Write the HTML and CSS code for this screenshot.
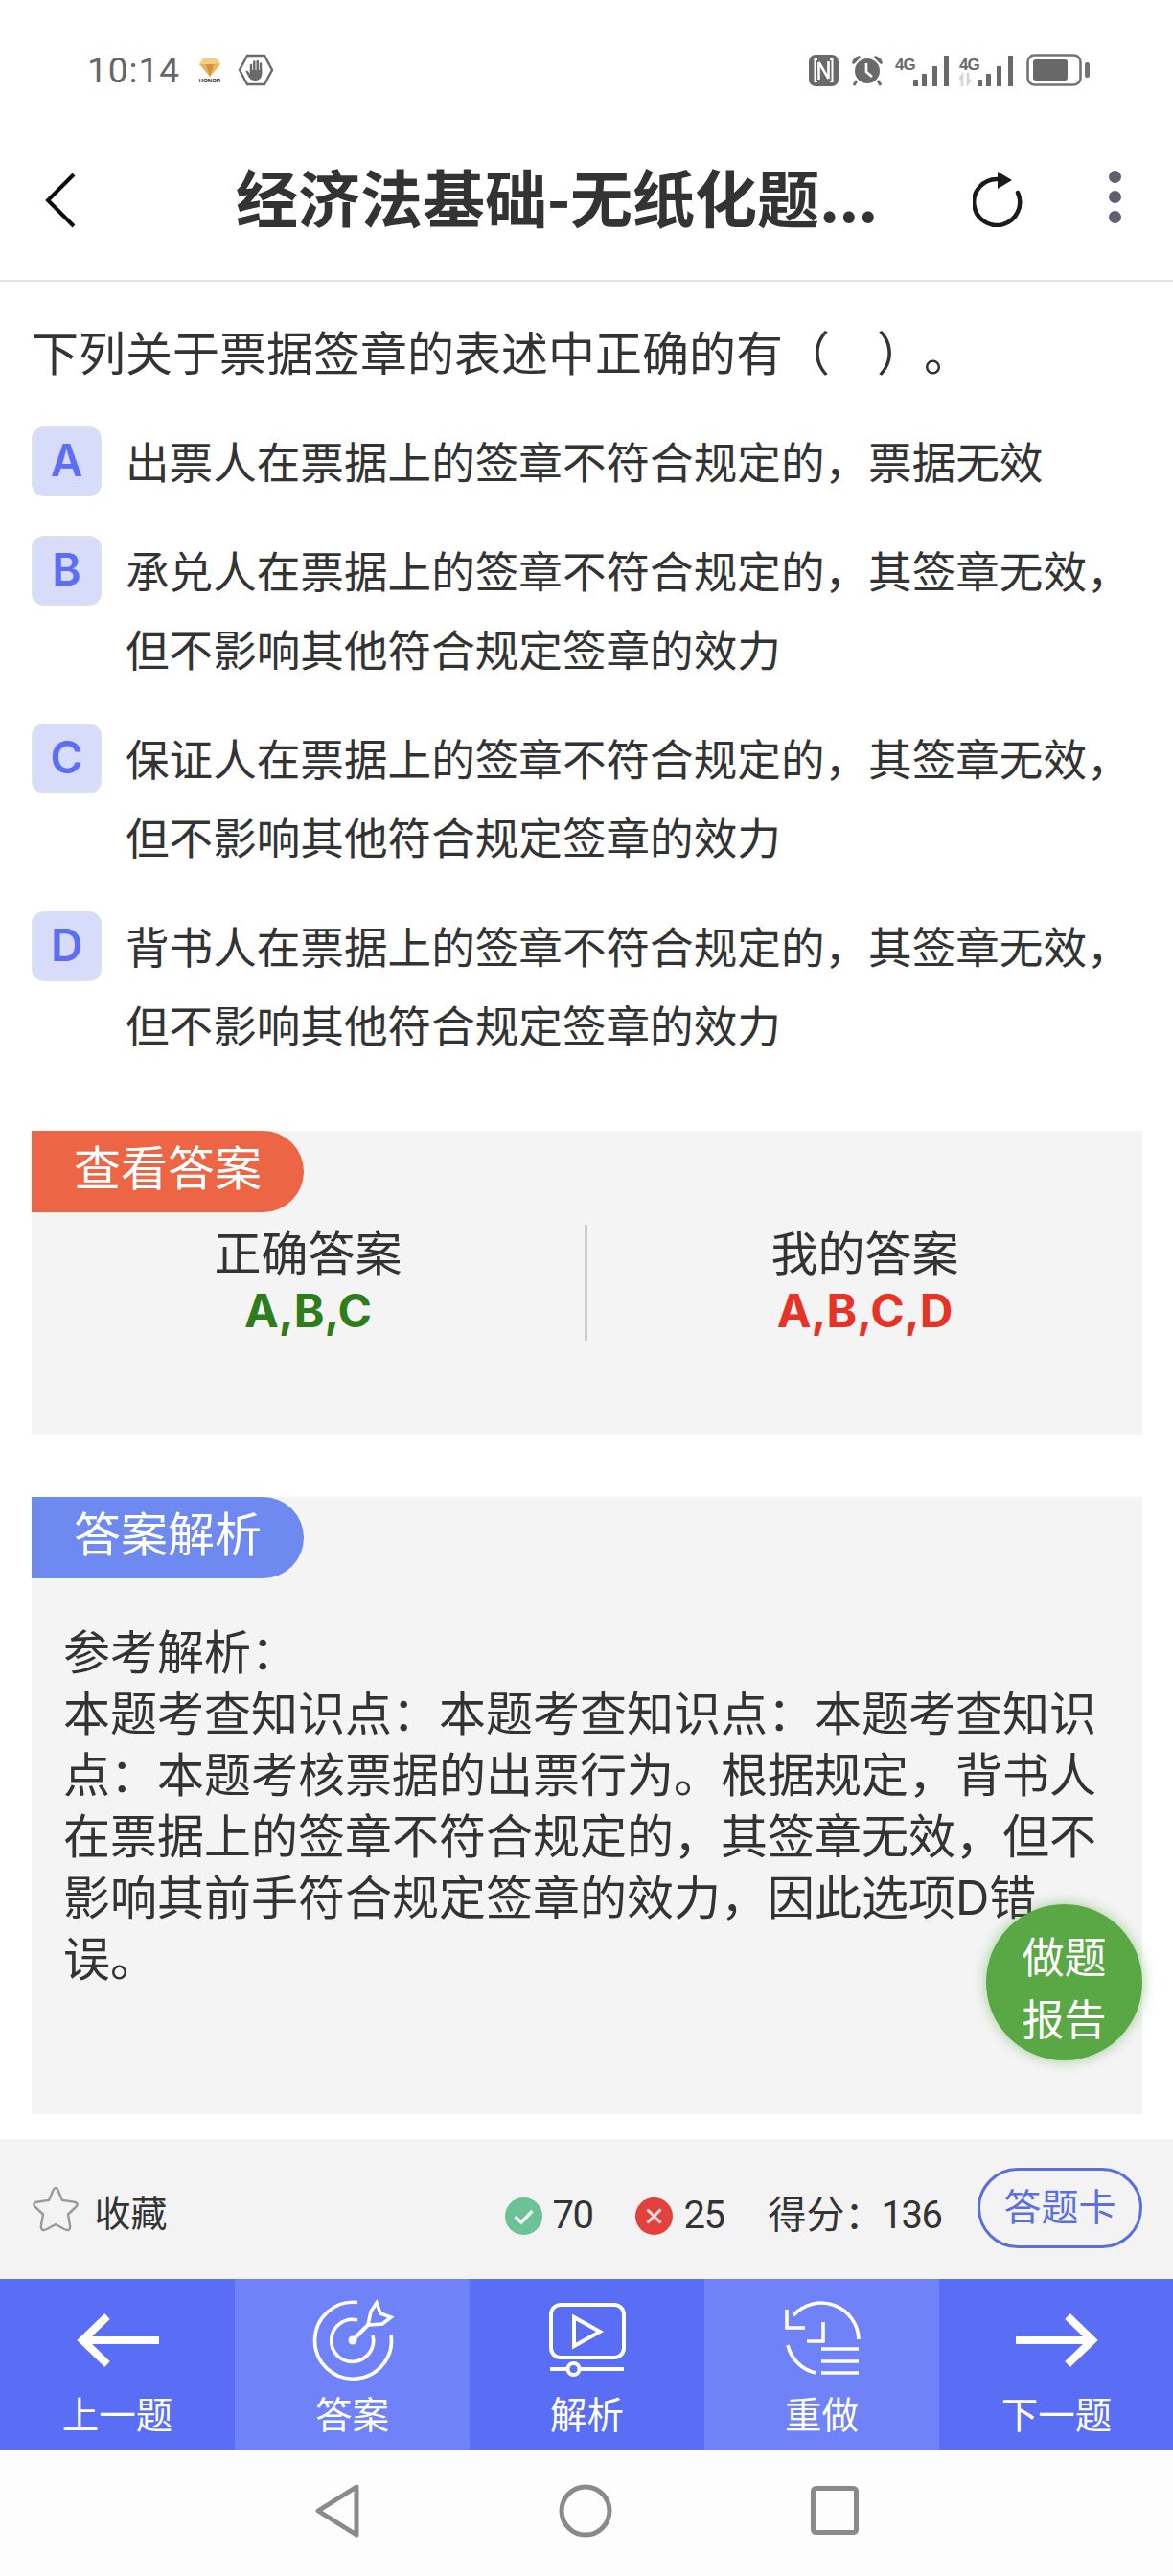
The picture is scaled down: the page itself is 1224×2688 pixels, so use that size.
FILE: index.html
```html
<!DOCTYPE html>
<html lang="zh-CN">
<head>
<meta charset="utf-8">
<title>经济法基础-无纸化题库</title>
<link rel="stylesheet" href="styles.css">
</head>
<body>
<div class="page">
  <div class="status">
    <div class="status-left">
      <span class="time">10:14</span>
      <svg class="ic-honor" width="24" height="26" viewBox="0 0 24 26">
        <path d="M5 1H19L23 7L12 20L1 7Z" fill="#e9b45c"/>
        <path d="M12 20L8 7H16Z" fill="#d3923a"/>
        <path d="M5 1H19L23 7H1Z" fill="#f3cf86"/>
        <text x="12" y="26" class="honor-text">HONOR</text>
      </svg>
      <svg class="ic-hand" width="38" height="34" viewBox="0 0 38 34">
        <path d="M10 2H28L36 17L28 32H10L2 17Z" fill="none" stroke="#6a6a6a" stroke-width="2.400"/>
        <path d="M14 21V12M17.300 20V8.500M20.700 20V8M24 21V10.500" stroke="#6a6a6a" stroke-width="2.500" stroke-linecap="round" fill="none"/>
        <path d="M12.800 17V21L10.500 18C9.500 16.800 8 17.800 8.800 19.300L12 25C13.500 27.300 15.500 28 18 28C22.500 28 25.300 25.500 25.300 21V17Z" fill="#6a6a6a"/>
      </svg>
    </div>
    <div class="status-right">
      <svg class="ic-nfc" width="31" height="33" viewBox="0 0 31 33">
        <rect x="0" y="0" width="31" height="33" rx="7" fill="#6a6a6a"/>
        <path d="M9 5H6.500V28H9M22 5H24.500V28H22" fill="none" stroke="#fff" stroke-width="2"/>
        <path d="M10.500 8V26M10.500 8L20.500 25M20.500 7V25" fill="none" stroke="#fff" stroke-width="2.600"/>
      </svg>
      <svg class="ic-alarm" width="34" height="33" viewBox="0 0 34 33">
        <circle cx="17" cy="17" r="13" fill="#6a6a6a"/>
        <path d="M1 9C2 4 5 2 9 1L10 3L3 10ZM33 9C32 4 29 2 25 1L24 3L31 10Z" fill="#6a6a6a"/>
        <path d="M6 27L3 32M28 27L31 32" stroke="#6a6a6a" stroke-width="3"/>
        <path d="M16 9V18L22 23" fill="none" stroke="#fff" stroke-width="2.600"/>
      </svg>
      <svg class="ic-signal" width="56" height="33" viewBox="0 0 56 33">
        <text x="0" y="16" class="net-text">4G</text>
        <path d="M19 26h5v7H19zM28 20h5v13H28zM39 12h5v21H39zM51 1h5v32H51z" fill="#6a6a6a"/>
      </svg>
      <svg class="ic-signal" width="56" height="33" viewBox="0 0 56 33">
        <text x="0" y="16" class="net-text">4G</text>
        <path d="M3 33V22L0 26M9 19V30L12 26" fill="none" stroke="#d4d4d4" stroke-width="2.600"/>
        <path d="M19 26h5v7H19zM28 20h5v13H28zM39 12h5v21H39zM51 1h5v32H51z" fill="#6a6a6a"/>
      </svg>
      <svg class="ic-battery" width="66" height="34" viewBox="0 0 66 34">
        <rect x="1.500" y="1.500" width="55" height="31" rx="7" fill="none" stroke="#737373" stroke-width="2.600"/>
        <rect x="7" y="6" width="36" height="22" rx="3" fill="#686868"/>
        <rect x="61" y="9" width="5" height="16" rx="2" fill="#737373"/>
      </svg>
    </div>
  </div>

  <header class="topbar">
    <svg class="ic-back" width="32" height="58" viewBox="0 0 32 58">
      <path d="M30 2L3 29L30 56" fill="none" stroke="#0a0a0a" stroke-width="4"/>
    </svg>
    <h1 class="title">经济法基础-无纸化题<span class="ellipsis">...</span></h1>
    <svg class="ic-refresh" width="54" height="58" viewBox="0 0 54 58">
      <path d="M47 22A24 24 0 1 1 26 8" fill="none" stroke="#1b1b1b" stroke-width="4.500" stroke-linecap="round"/>
      <path d="M26 0L41 9L26 18Z" fill="#1b1b1b"/>
    </svg>
    <div class="dots"><i></i><i></i><i></i></div>
  </header>

  <main class="content">
    <p class="question">下列关于票据签章的表述中正确的有（　）。</p>
    <div class="options">
      <div class="option"><span class="badge">A</span><p class="option-text">出票人在票据上的签章不符合规定的，票据无效</p></div>
      <div class="option"><span class="badge">B</span><p class="option-text">承兑人在票据上的签章不符合规定的，其签章无效，但不影响其他符合规定签章的效力</p></div>
      <div class="option"><span class="badge">C</span><p class="option-text">保证人在票据上的签章不符合规定的，其签章无效，但不影响其他符合规定签章的效力</p></div>
      <div class="option"><span class="badge">D</span><p class="option-text">背书人在票据上的签章不符合规定的，其签章无效，但不影响其他符合规定签章的效力</p></div>
    </div>

    <section class="panel panel-answer">
      <div class="tag tag-orange">查看答案</div>
      <div class="answers">
        <div class="answer-col first"><div class="answer-label">正确答案</div><div class="answer-value right">A,B,C</div></div>
        <div class="answer-col divided"><div class="answer-label">我的答案</div><div class="answer-value wrong">A,B,C,D</div></div>
      </div>
    </section>

    <section class="panel panel-analysis">
      <div class="tag tag-blue">答案解析</div>
      <div class="analysis">参考解析：<br>本题考查知识点：本题考查知识点：本题考查知识点：本题考核票据的出票行为。根据规定，背书人在票据上的签章不符合规定的，其签章无效，但不影响其前手符合规定签章的效力，因此选项D错误。</div>
      <div class="fab">做题<br>报告</div>
    </section>
  </main>

  <div class="toolbar">
    <div class="collect">
      <svg class="ic-star" width="50" height="48" viewBox="0 0 50 48">
        <path d="M25 2C26.500 2 27.500 3.500 29 8L32 15L43 16.500C48 17 49 19.500 46 22L38 29.500L40 41C41 46 38 47 34 45L25 40L16 45C12 47 9 46 10 41L12 29.500L4 22C1 19.500 2 17 7 16.500L18 15L21 8C22.500 3.500 23.500 2 25 2Z" fill="none" stroke="#9a9a9a" stroke-width="2.400"/>
      </svg>
      <span class="collect-text">收藏</span>
    </div>
    <div class="stats">
      <svg class="stat-ic" width="39" height="39" viewBox="0 0 39 39">
        <circle cx="19.500" cy="19.500" r="19.500" fill="#6bc296"/>
        <path d="M10.500 20L17 26L28.500 14" fill="none" stroke="#f0f7f3" stroke-width="3.600"/>
      </svg>
      <span class="stat-num">70</span>
      <svg class="stat-ic stat-gap" width="39" height="39" viewBox="0 0 39 39">
        <circle cx="19.500" cy="19.500" r="19.500" fill="#e2423d"/>
        <path d="M12.500 12.500L26.500 26.500M26.500 12.500L12.500 26.500" stroke="#f9dcdb" stroke-width="3"/>
      </svg>
      <span class="stat-num">25</span>
      <span class="score">得分：<span class="score-num">136</span></span>
    </div>
    <div class="card-btn">答题卡</div>
  </div>

  <nav class="actions">
    <div class="action">
      <svg width="90" height="90" viewBox="0 0 90 90"><path d="M88 44H8M34 19L8 44L34 69" fill="none" stroke="#fff" stroke-width="8"/></svg>
      <span class="action-label">上一题</span>
    </div>
    <div class="action light">
      <svg width="90" height="90" viewBox="0 0 90 90" fill="none" stroke="#fff">
        <path d="M50 4.500A40 40 0 1 0 85 38" stroke-width="3.600"/>
        <path d="M50 23A22 22 0 1 0 66 39" stroke-width="3.600"/>
        <circle cx="45" cy="44" r="4.500" fill="#fff" stroke="none"/>
        <path d="M45 44L61 28" stroke-width="4"/>
        <path d="M61 28L64 14L70 5L74 16L85 20L76 27Z" stroke-width="3.600"/>
      </svg>
      <span class="action-label">答案</span>
    </div>
    <div class="action">
      <svg width="90" height="90" viewBox="0 0 90 90" fill="none" stroke="#fff" stroke-width="4">
        <rect x="7" y="7" width="76" height="55" rx="10"/>
        <path d="M31 20V50L58 35Z"/>
        <path d="M6 74H24M37 74H83"/>
        <circle cx="30.500" cy="74" r="6"/>
      </svg>
      <span class="action-label">解析</span>
    </div>
    <div class="action light">
      <svg width="90" height="90" viewBox="0 0 90 90" fill="none" stroke="#fff" stroke-width="3.600">
        <path d="M15 18A39 39 0 0 1 83 43"/>
        <path d="M8 12V31H27"/>
        <path d="M46 25V45H29"/>
        <path d="M9 49A39 39 0 0 0 38 78"/>
        <path d="M44 53H83M44 66H83M44 78H83"/>
      </svg>
      <span class="action-label">重做</span>
    </div>
    <div class="action">
      <svg width="90" height="90" viewBox="0 0 90 90"><path d="M2 44H82M56 19L82 44L56 69" fill="none" stroke="#fff" stroke-width="8"/></svg>
      <span class="action-label">下一题</span>
    </div>
  </nav>

  <div class="sysnav">
    <svg width="48" height="56" viewBox="0 0 48 56"><path d="M44 3L4 28L44 53Z" fill="none" stroke="#8a8a8a" stroke-width="5" stroke-linejoin="round"/></svg>
    <svg class="sys-home" width="56" height="56" viewBox="0 0 56 56"><circle cx="28" cy="28" r="25" fill="none" stroke="#8a8a8a" stroke-width="5"/></svg>
    <svg class="sys-recent" width="50" height="52" viewBox="0 0 50 52"><rect x="2.500" y="2.500" width="45" height="46" rx="3" fill="none" stroke="#8a8a8a" stroke-width="5"/></svg>
  </div>
</div>
</body>
</html>
```
FILE: styles.css
```css
* { box-sizing: border-box; }
html, body { margin: 0; padding: 0; background: #fff; }
body { font-family: Roboto, "Noto Sans CJK SC", sans-serif; color: #333; text-spacing-trim: space-all; }
p, h1 { margin: 0; }
svg { display: block; flex: none; }
.page { width: 1224px; height: 2688px; overflow: hidden; }

.status { height: 114px; padding: 32px 87px 0 91px; display: flex; justify-content: space-between; align-items: center; }
.status-left, .status-right { display: flex; align-items: center; }
.time { font-size: 37px; color: #666; letter-spacing: 1px; width: 116px; }
.ic-hand { margin-left: 17px; }
.honor-text { font: 700 6px "Liberation Sans", sans-serif; fill: #222; text-anchor: middle; }
.net-text { font: 700 17px "Liberation Sans", sans-serif; fill: #6a6a6a; letter-spacing: -1px; }
.ic-alarm { margin-left: 13px; }
.ic-signal { margin-left: 12px; }
.ic-signal + .ic-signal { margin-left: 11px; }
.ic-battery { margin-left: 14px; }

.topbar { height: 180px; border-bottom: 2px solid #e2e2e2; padding: 8px 54px 0 47px; display: flex; align-items: center; }
.ic-back { margin-top: 4px; }
.title { font-size: 65px; font-weight: 700; line-height: 1; color: #333; width: 937px; padding-left: 167px; margin-top: -6px; white-space: nowrap; font-family: "Noto Sans CJK SC", sans-serif; }
.ellipsis { letter-spacing: -1px; }
.ic-refresh { margin-top: 2px; }
.dots { margin-left: 88px; margin-top: -4px; display: flex; flex-direction: column; gap: 8px; }
.dots i { display: block; width: 13px; height: 13px; border-radius: 50%; background: #5f5f70; }

.content { padding: 0 32px 0 33px; }
.question { font-size: 49px; line-height: 82px; padding-top: 36px; white-space: nowrap; }
.options { padding-top: 29px; display: flex; flex-direction: column; gap: 29px; }
.option { display: flex; align-items: flex-start; }
.badge { flex: none; width: 73px; height: 73px; margin-top: 4px; border: 2px solid #dedfe8; border-radius: 13px; background: #d6dcfa; color: #5b6ef5; font: 600 46px/67px Inter, sans-serif; text-align: center; }
.option-text { margin: 3px 0 0 25px; font-size: 45.600px; line-height: 82px; }

.panel { position: relative; background: #f4f4f4; width: 1159px; }
.panel-answer { margin-top: 66px; height: 317px; }
.panel-analysis { margin-top: 65px; height: 644px; }
.tag { width: 284px; height: 85px; border-radius: 0 43px 43px 0; color: #fff; font-size: 49px; line-height: 82px; padding-left: 44px; }
.tag-orange { background: #ec6545; }
.tag-blue { background: #6e8af0; }

.answers { display: flex; margin-top: 13px; height: 121px; }
.answer-col { flex: 1; text-align: center; }
.answer-col.first { flex: 0 0 577px; }
.divided { border-left: 3px solid #cccccc; }
.answer-label { font-size: 49px; line-height: 64px; }
.answer-value { font: 700 48px/52px Inter, sans-serif; }
.right { color: #2f7d1a; }
.wrong { color: #e63326; }

.analysis { padding: 46px 40px 0 33px; font-family: Inter, "Noto Sans CJK SC", sans-serif; font-size: 49px; line-height: 64px; }
.fab { position: absolute; left: 996px; top: 425px; width: 163px; height: 163px; border-radius: 50%; background: #5aa845; box-shadow: 0 0 14px rgba(90,168,69,.55); color: #fff; font-size: 44px; line-height: 65px; text-align: center; padding-top: 21px; font-family: "Noto Sans CJK SC", sans-serif; }

.toolbar { margin-top: 26px; height: 146px; background: #f3f3f3; display: flex; align-items: center; padding: 0 32px 0 33px; }
.collect { display: flex; align-items: center; }
.collect-text { margin-left: 15.500px; margin-top: 10px; font-size: 38px; line-height: 48px; }
.stats { margin-left: 352px; margin-top: 14px; display: flex; align-items: center; }
.stat-num { margin-left: 11px; font-size: 40px; letter-spacing: -1.500px; line-height: 48px; }
.stat-gap { margin-left: 45px; }
.score { margin-left: 46px; font-size: 40px; line-height: 48px; }
.score-num { letter-spacing: -1.500px; margin-left: -2px; }
.card-btn { margin-left: auto; width: 172px; height: 84px; margin-top: -3px; border: 3px solid #5a6fdc; border-radius: 42px; color: #5a6fe0; font-size: 39px; line-height: 78px; text-align: center; }

.actions { height: 178px; display: flex; }
.action { flex: 0 0 245px; background: #5a6df5; display: flex; flex-direction: column; align-items: center; padding-top: 20px; }
.action.light { background: #7082f7; }
.action-label { margin-top: 11px; color: #fff; font-size: 38.500px; line-height: 44px; }

.sysnav { height: 132px; background: #fdfdfd; display: flex; align-items: center; padding: 0 0 4px 328px; }
.sys-home { margin-left: 207px; }
.sys-recent { margin-left: 207px; }
```
